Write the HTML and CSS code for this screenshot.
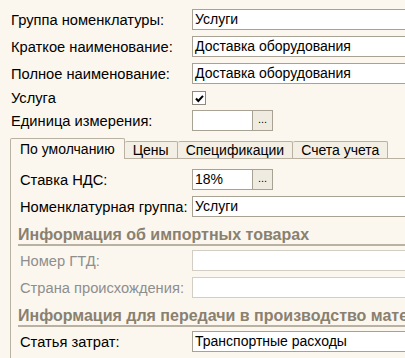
FILE: index.html
```html
<!DOCTYPE html>
<html lang="ru">
<head>
    <meta charset="UTF-8">
    <title>Номенклатура</title>
    <link rel="stylesheet" href="styles.css">
</head>
<body>
    <div class="form">
        <div class="row">
            <span class="label">Группа номенклатуры:</span>
            <div class="field">Услуги</div>
        </div>
        <div class="row">
            <span class="label">Краткое наименование:</span>
            <div class="field">Доставка оборудования</div>
        </div>
        <div class="row">
            <span class="label">Полное наименование:</span>
            <div class="field">Доставка оборудования</div>
        </div>
        <div class="row check-row">
            <span class="label">Услуга</span>
            <span class="check">
                <svg width="11" height="11" viewBox="0 0 11 11"><path d="M2 5.5 L4.3 8 L9 2.8" fill="none" stroke="#000" stroke-width="2"/></svg>
            </span>
        </div>
        <div class="row">
            <span class="label">Единица измерения:</span>
            <div class="picker">
                <div class="field short"></div>
                <span class="dots">...</span>
            </div>
        </div>

        <!-- Закладки -->
        <div class="tabs">
            <div class="tab-bar">
                <span class="tab active">По умолчанию</span>
                <span class="tab">Цены</span>
                <span class="tab">Спецификации</span>
                <span class="tab">Счета учета</span>
            </div>
            <div class="tab-panel">
                <div class="row">
                    <span class="label">Ставка НДС:</span>
                    <div class="picker">
                        <div class="field short">18%</div>
                        <span class="dots">...</span>
                    </div>
                </div>
                <div class="row">
                    <span class="label">Номенклатурная группа:</span>
                    <div class="field">Услуги</div>
                </div>

                <div class="group-title">Информация об импортных товарах</div>
                <div class="row disabled">
                    <span class="label">Номер ГТД:</span>
                    <div class="field"></div>
                </div>
                <div class="row disabled">
                    <span class="label">Страна происхождения:</span>
                    <div class="field"></div>
                </div>

                <div class="group-title">Информация для передачи в производство мате</div>
                <div class="row">
                    <span class="label">Статья затрат:</span>
                    <div class="field">Транспортные расходы</div>
                </div>
            </div>
        </div>
    </div>
</body>
</html>
```

FILE: styles.css
```css
body {
    margin: 0;
    background: #fbf7ee;
    font-family: 'Liberation Sans', Arial, sans-serif;
    font-size: 14px;
    color: #000;
    overflow: hidden;
}
.form {
    padding: 9px 0 0 11px;
    width: 394px;
    display: flex;
    flex-direction: column;
    gap: 6px;
}
.row {
    display: grid;
    grid-template-columns: 181px 1fr;
    align-items: center;
    height: 21px;
}
.label {
    font-size: 14.7px;
    white-space: nowrap;
}
.field {
    box-sizing: border-box;
    height: 21px;
    width: 215px;
    padding: 0 2px;
    line-height: 19px;
    background: #fff;
    border: 1px solid #a8a294;
    white-space: nowrap;
}
.field.short {
    width: 61px;
}
.picker {
    display: flex;
}
.dots {
    box-sizing: border-box;
    width: 20px;
    height: 21px;
    border: 1px solid #a8a294;
    border-left: none;
    background: #efebe1;
    font-size: 11px;
    line-height: 16px;
    text-align: center;
}
.check-row {
    height: 14px;
}
.check {
    box-sizing: border-box;
    width: 14px;
    height: 14px;
    border: 1px solid #8f8a7e;
    background: #fff;
    display: flex;
    align-items: center;
    justify-content: center;
}

/* Закладки */
.tabs {
    margin: 1px 0 0 -1px;
}
.tab-bar {
    display: flex;
    align-items: flex-end;
    height: 20px;
}
.tab {
    box-sizing: border-box;
    height: 17px;
    padding: 0 8px;
    line-height: 16px;
    border: 1px solid #b9b2a3;
    border-bottom: none;
    border-left: none;
    background: #f4efe4;
    border-radius: 2px 2px 0 0;
}
.tab.active {
    height: 21px;
    padding: 0 9px;
    line-height: 20px;
    border-left: 1px solid #b9b2a3;
    background: #fbf7ee;
    position: relative;
    top: 1px;
}
.tab-panel {
    border-top: 1px solid #b9b2a3;
    border-left: 1px solid #b9b2a3;
    padding: 10px 0 20px 9px;
    display: flex;
    flex-direction: column;
    gap: 6px;
}
.tab-panel .row {
    grid-template-columns: 172px 1fr;
}
.group-title {
    font-weight: bold;
    font-size: 16px;
    line-height: 18px;
    color: #8a8070;
    white-space: nowrap;
    overflow: hidden;
    margin: 3px 0 -2px -2px;
    border-bottom: 2px solid #b9b2a3;
}
.disabled .label {
    color: #8e8e8e;
}
.disabled .field {
    border-color: #d3cec3;
}
```
